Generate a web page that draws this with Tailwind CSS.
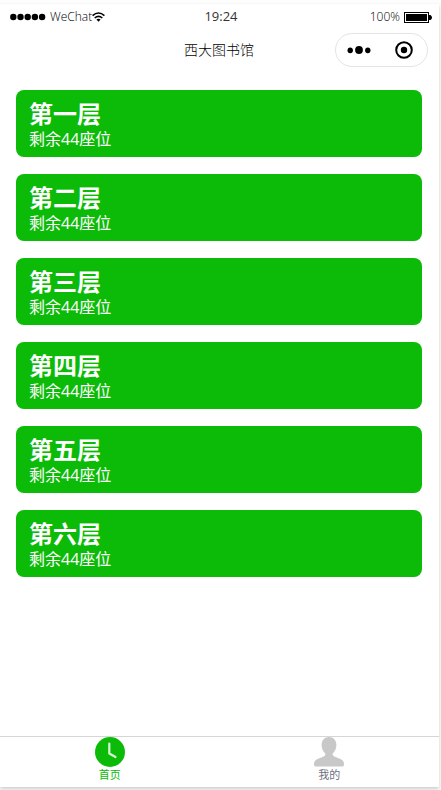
<!DOCTYPE html>
<html lang="zh-CN">
<head>
<meta charset="utf-8">
<meta name="viewport" content="width=device-width, initial-scale=1">
<title>西大图书馆</title>
<script src="https://cdn.jsdelivr.net/npm/@tailwindcss/browser@4"></script>
</head>
<body class="flex min-h-screen flex-col bg-[#fdfdfd] pt-1 pr-0.5 pb-[3px] font-['Open_Sans','Noto_Sans_CJK_SC',sans-serif] text-black">
<div class="flex grow flex-col bg-white shadow-[0_2px_4px_rgba(0,0,0,0.2)]">
  <header>
    <div class="grid h-[26px] grid-cols-3 items-center pr-[7px] pl-2.5 text-xs">
      <div class="flex items-center font-light">
        <svg class="mr-1 h-2 w-9" viewBox="0 0 36 8" aria-hidden="true"><circle cx="3.3" cy="4" r="3.2"/><circle cx="10.5" cy="4" r="3.2"/><circle cx="17.7" cy="4" r="3.2"/><circle cx="24.9" cy="4" r="3.2"/><circle cx="32.1" cy="4" r="3.2"/></svg>
        <span class="text-xs">WeChat</span>
        <svg class="h-[10px] w-[13px]" viewBox="0 0 13 10" fill="none" stroke="#000" stroke-width="1.6" aria-hidden="true"><path d="M.6 3.6Q6.5-1.6 12.4 3.6M2.7 6Q6.5 2.7 10.3 6"/><path d="M4.4 7.6Q6.5 6 8.6 7.6L6.5 9.8Z" fill="#000" stroke="none"/></svg>
      </div>
      <div class="text-center text-[13px] text-[#333]">19:24</div>
      <div class="flex items-center justify-end gap-1 font-light">
        <span>100%</span>
        <svg class="h-[11px] w-7" viewBox="0 0 28 11" aria-hidden="true"><rect x=".5" y=".5" width="24" height="10" fill="#fff" stroke="#000"/><rect x="2" y="2" width="21" height="7"/><path d="M25 3h1.5q1.5 1 1.5 2.500t-1.500 2.500H25z"/></svg>
      </div>
    </div>
    <div class="grid h-10 grid-cols-[1fr_auto_1fr] items-center pr-[11px]">
      <h1 class="col-start-2 ml-2.5 text-sm leading-5 font-light">西大图书馆</h1>
      <div class="flex h-[34px] w-[93px] items-center justify-self-end rounded-full border border-[#e4e4e4]">
        <button class="flex h-full flex-1 items-center justify-center" aria-label="更多">
          <svg class="h-2 w-6" viewBox="0 0 24 8"><ellipse cx="3.200" cy="4.300" rx="2.700" ry="2.900"/><circle cx="12" cy="4" r="3.900"/><ellipse cx="20.800" cy="4.300" rx="2.700" ry="2.900"/></svg>
        </button>
        <button class="flex h-full flex-1 items-center justify-center" aria-label="关闭">
          <svg class="size-[18px]" viewBox="0 0 18 18"><circle cx="9" cy="9" r="7.800" fill="none" stroke="#000" stroke-width="2"/><circle cx="9" cy="9" r="3.200"/></svg>
        </button>
      </div>
    </div>
  </header>
  <main class="grow px-4 pt-5 pb-4">
    <ul class="mr-px flex flex-col gap-[17px] text-white">
      <li class="rounded-lg bg-[#0cbb08] px-[13px] py-2"><h2 class="text-2xl leading-[31px] font-bold">第一层</h2><p class="text-base leading-5">剩余44座位</p></li>
      <li class="rounded-lg bg-[#0cbb08] px-[13px] py-2"><h2 class="text-2xl leading-[31px] font-bold">第二层</h2><p class="text-base leading-5">剩余44座位</p></li>
      <li class="rounded-lg bg-[#0cbb08] px-[13px] py-2"><h2 class="text-2xl leading-[31px] font-bold">第三层</h2><p class="text-base leading-5">剩余44座位</p></li>
      <li class="rounded-lg bg-[#0cbb08] px-[13px] py-2"><h2 class="text-2xl leading-[31px] font-bold">第四层</h2><p class="text-base leading-5">剩余44座位</p></li>
      <li class="rounded-lg bg-[#0cbb08] px-[13px] py-2"><h2 class="text-2xl leading-[31px] font-bold">第五层</h2><p class="text-base leading-5">剩余44座位</p></li>
      <li class="rounded-lg bg-[#0cbb08] px-[13px] py-2"><h2 class="text-2xl leading-[31px] font-bold">第六层</h2><p class="text-base leading-5">剩余44座位</p></li>
    </ul>
  </main>
  <nav class="grid h-[51px] grid-cols-2 border-t border-[#d6d6d6] text-[11px] leading-4">
    <a href="#" class="flex flex-col items-center text-[#0cbb08]" aria-current="page">
      <svg class="size-[30px]" viewBox="0 0 30 30" aria-hidden="true"><circle cx="15" cy="15" r="15" fill="#0cbb08"/><path d="M14.300 6.500V16.500L20.500 20" fill="none" stroke="#d6f5d4" stroke-width="2.200" stroke-linecap="round" stroke-linejoin="round"/></svg>
      <span>首页</span>
    </a>
    <a href="#" class="flex flex-col items-center text-[#6f7180]">
      <svg class="size-[30px]" viewBox="0 0 30 30" fill="#c8c8c8" aria-hidden="true"><path d="M15 0C10.500 0 7.600 3.300 7.600 8C7.600 11.500 9 14.500 11.300 16.500V17.500C11.300 18.800 10 19.300 8.500 19.900L3.500 22C1 23.200 0 24.800 0 27.500Q0 29.500 1.500 29.500H28.500Q30 29.500 30 27.500C30 24.800 29 23.200 26.500 22L21.500 19.900C20 19.300 18.700 18.800 18.700 17.500V16.500C21 14.500 22.400 11.500 22.400 8C22.400 3.300 19.500 0 15 0Z"/></svg>
      <span>我的</span>
    </a>
  </nav>
</div>
</body>
</html>
